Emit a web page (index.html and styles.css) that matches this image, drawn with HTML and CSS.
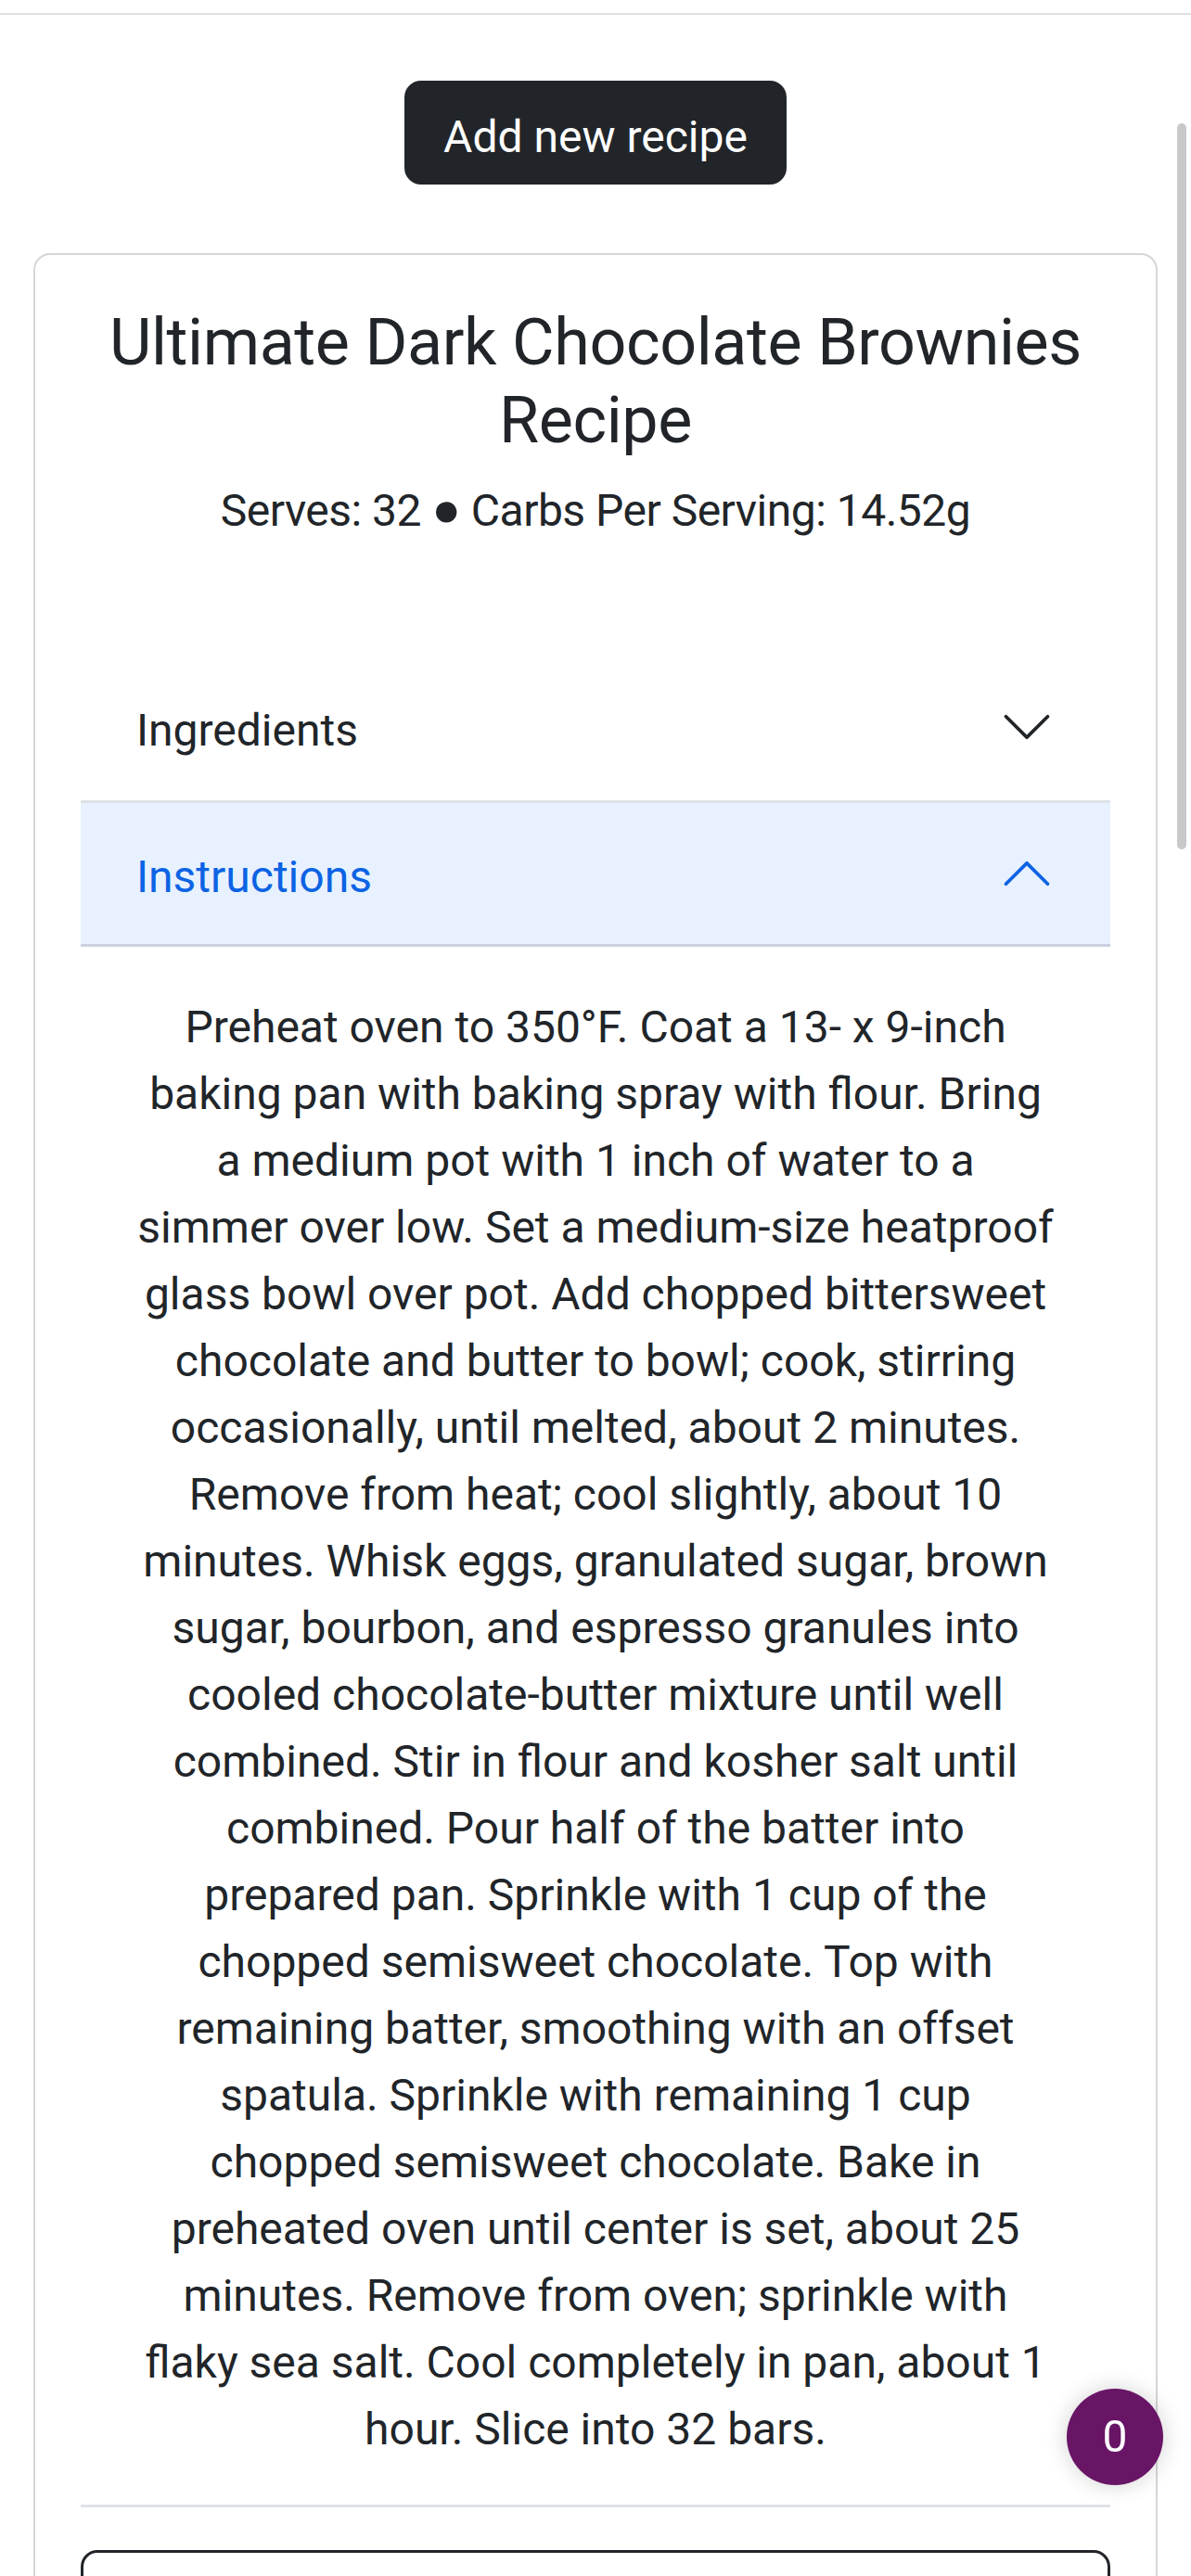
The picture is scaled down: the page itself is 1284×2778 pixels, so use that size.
FILE: index.html
```html
<!DOCTYPE html>
<html lang="en">
<head>
<meta charset="utf-8">
<title>Recipes</title>
<link rel="stylesheet" href="styles.css">
</head>
<body>
<div class="topbar"></div>
<main class="container">
  <div class="actions">
    <button class="btn-add" type="button">Add new recipe</button>
  </div>
  <section class="card">
    <div class="card-body">
      <h4 class="title">Ultimate Dark Chocolate Brownies<br>Recipe</h4>
      <p class="meta">Serves: 32 <span class="dot">●</span> Carbs Per Serving: 14.52g</p>
      <div class="accordion">
        <div class="acc-item">
          <button class="acc-btn" type="button">
            <span>Ingredients</span>
            <svg class="chev" viewBox="0 0 16 16" width="60" height="60"><path fill="#212529" fill-rule="evenodd" d="M1.646 4.646a.5.5 0 0 1 .708 0L8 10.293l5.646-5.647a.5.5 0 0 1 .708.708l-6 6a.5.5 0 0 1-.708 0l-6-6a.5.5 0 0 1 0-.708z"/></svg>
          </button>
        </div>
        <div class="acc-item">
          <button class="acc-btn open" type="button">
            <span>Instructions</span>
            <svg class="chev up" viewBox="0 0 16 16" width="60" height="60"><path fill="#0c63e4" fill-rule="evenodd" d="M1.646 4.646a.5.5 0 0 1 .708 0L8 10.293l5.646-5.647a.5.5 0 0 1 .708.708l-6 6a.5.5 0 0 1-.708 0l-6-6a.5.5 0 0 1 0-.708z"/></svg>
          </button>
          <div class="acc-body">
            <p class="steps">Preheat oven to 350°F. Coat a 13- x 9-inch<br>baking pan with baking spray with flour. Bring<br>a medium pot with 1 inch of water to a<br>simmer over low. Set a medium-size heatproof<br>glass bowl over pot. Add chopped bittersweet<br>chocolate and butter to bowl; cook, stirring<br>occasionally, until melted, about 2 minutes.<br>Remove from heat; cool slightly, about 10<br>minutes. Whisk eggs, granulated sugar, brown<br>sugar, bourbon, and espresso granules into<br>cooled chocolate-butter mixture until well<br>combined. Stir in flour and kosher salt until<br>combined. Pour half of the batter into<br>prepared pan. Sprinkle with 1 cup of the<br>chopped semisweet chocolate. Top with<br>remaining batter, smoothing with an offset<br>spatula. Sprinkle with remaining 1 cup<br>chopped semisweet chocolate. Bake in<br>preheated oven until center is set, about 25<br>minutes. Remove from oven; sprinkle with<br>flaky sea salt. Cool completely in pan, about 1<br>hour. Slice into 32 bars.</p>
          </div>
        </div>
      </div>
      <div class="outline-box"></div>
    </div>
  </section>
</main>
<div class="cart-badge">0</div>
<div class="scroll-thumb"></div>
</body>
</html>
```
FILE: styles.css
```css
html {
  overflow: hidden;
  scrollbar-width: none;
}
html::-webkit-scrollbar { display: none; }

body {
  margin: 0;
  font-family: Roboto, "Noto Sans", "Liberation Sans", sans-serif;
  font-size: 48px;
  line-height: 72px;
  color: #212529;
  background: #fff;
}

.topbar {
  height: 14px;
  border-bottom: 2px solid #dee2e6;
}

.container {
  padding: 0 36px;
}

.actions {
  display: flex;
  justify-content: center;
  padding-top: 71px;
  margin-bottom: 74px;
}

.btn-add {
  font: inherit;
  line-height: 72px;
  height: 112px;
  color: #fff;
  background: #212529;
  border: 3px solid #212529;
  border-radius: 18px;
  padding: 22px 39px 12px;
}

.card {
  border: 2px solid #d6d6d6;
  border-radius: 18px;
  background: #fff;
}

.card-body {
  padding: 52px 49px 48px;
}

.title {
  margin: 0 0 20px;
  font-size: 70px;
  line-height: 84px;
  height: 168px;
  letter-spacing: -0.4px;
  font-weight: 400;
  text-align: center;
}

.meta {
  margin: 0 0 121px;
  height: 72px;
  text-align: center;
  letter-spacing: -0.5px;
}

.dot {
  font-family: "Liberation Sans", sans-serif;
  font-size: 52px;
  line-height: 0;
}

.acc-item {
  border-bottom: 3px solid #dee2e6;
}

.acc-btn {
  display: flex;
  align-items: center;
  width: 100%;
  height: 155px;
  padding: 44px 60px 39px;
  font: inherit;
  line-height: 72px;
  color: #212529;
  background: #fff;
  border: 0;
  text-align: left;
}

.acc-btn.open {
  color: #0c63e4;
  background: #e7f1ff;
  box-shadow: inset 0 -3px 0 rgba(0, 0, 0, 0.125);
}

.chev {
  margin-left: auto;
  margin-top: -8px;
  flex-shrink: 0;
}

.chev.up {
  transform: rotate(-180deg);
}

.acc-body {
  padding: 51px 60px 45px;
}

.steps {
  margin: 0;
  text-align: center;
  white-space: nowrap;
}

.outline-box {
  margin-top: 46px;
  height: 150px;
  border: 3px solid #212529;
  border-radius: 18px;
}

.cart-badge {
  position: fixed;
  right: 30px;
  bottom: 98px;
  width: 104px;
  height: 104px;
  border-radius: 50%;
  background: #681566;
  color: #fff;
  display: flex;
  align-items: center;
  justify-content: center;
  font-size: 48px;
  box-shadow: 0 0 24px rgba(0, 0, 0, 0.18);
}

.scroll-thumb {
  position: fixed;
  top: 133px;
  right: 5px;
  width: 10px;
  height: 783px;
  border-radius: 5px;
  background: #c8c8c8;
}
```
